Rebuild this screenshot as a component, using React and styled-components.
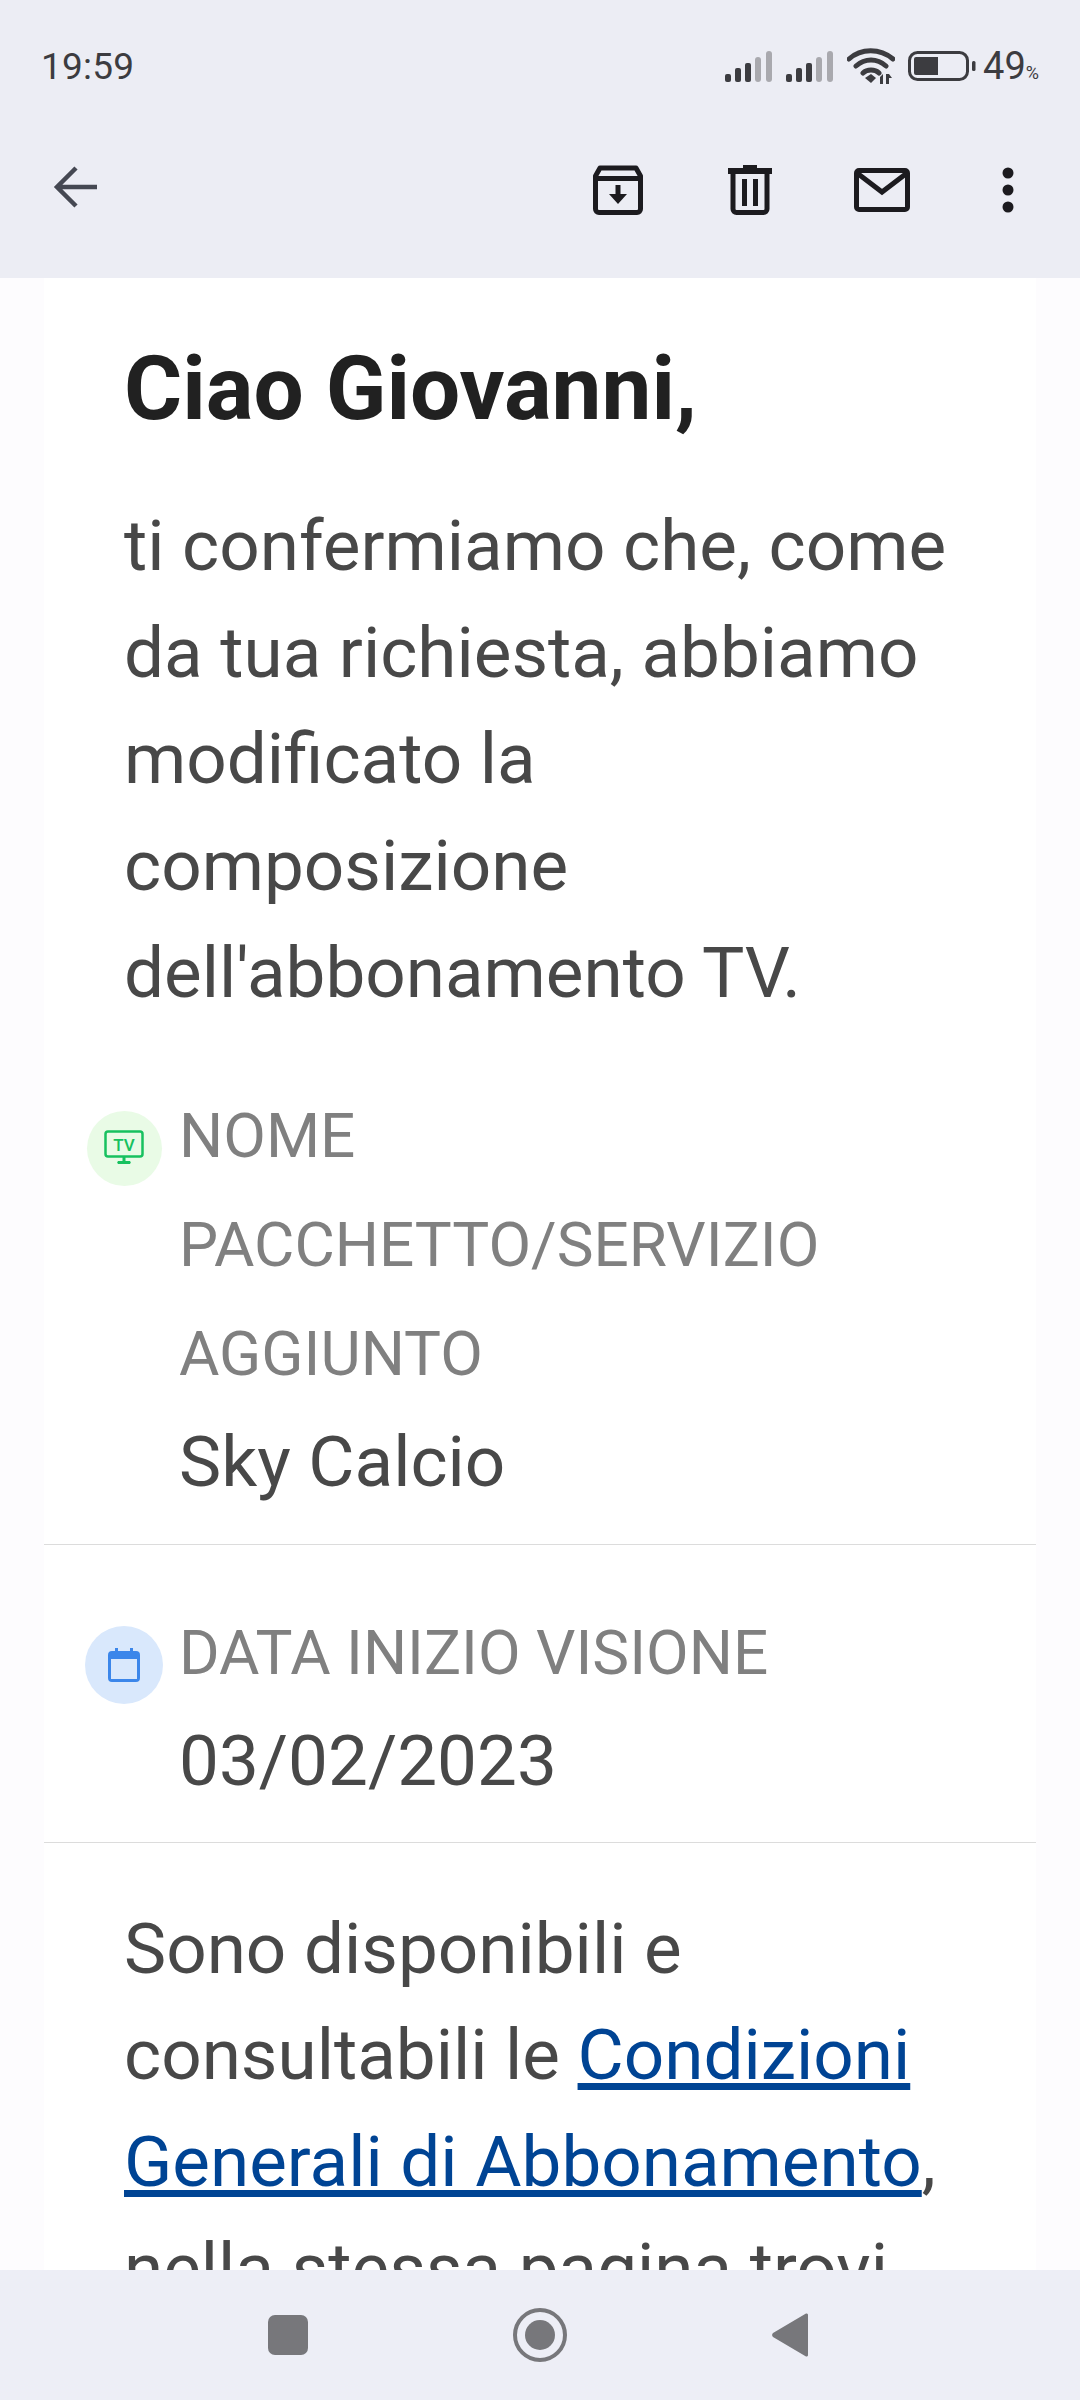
import React from 'react'
import styled, { createGlobalStyle } from 'styled-components'

const GlobalStyle = createGlobalStyle`
  html, body { margin: 0; padding: 0; background: #fff; }
  body { font-family: Roboto, "Liberation Sans", sans-serif; }
`

const Screen = styled.div`
  width: 1080px;
  height: 2400px;
  display: flex;
  flex-direction: column;
  overflow: hidden;
`

const TopBar = styled.header`
  height: 278px;
  flex: none;
  background: #ecedf4;
  box-sizing: border-box;
  padding: 49px 41px 0 41px;
  display: flex;
  flex-direction: column;
`

const StatusRow = styled.div`
  height: 34px;
  display: flex;
  align-items: center;
  justify-content: space-between;
  color: #3c3c40;
`

const Time = styled.span`
  font-size: 37px;
  letter-spacing: 0.2px;
  font-weight: 400;
`

const StatusIcons = styled.div`
  display: flex;
  align-items: center;
  gap: 13px;
`

const Battery = styled.span`
  font-size: 38px;
  margin-left: -6px;
  small { font-size: 18px; }
`

const ActionRow = styled.div`
  margin-top: 82px;
  margin-right: 15px;
  margin-left: 12px;
  display: flex;
  align-items: center;
`

const Actions = styled.div`
  margin-left: auto;
  display: flex;
  align-items: center;
  gap: 82px;
`

const Body = styled.main`
  flex: 1;
  min-height: 0;
  overflow: hidden;
  background: #fdfcfe;
`

const Sheet = styled.div`
  margin: 0 44px;
  background: #fff;
`

const Block = styled.div`
  padding: ${p => p.$top}px 64px 0 80px;
`

const Heading = styled.h1`
  margin: 0;
  font-size: 89px;
  line-height: 104px;
  font-weight: 700;
  color: #212121;
`

const Paragraph = styled.p`
  margin: ${p => p.$top || 0}px 0 0;
  font-size: 71px;
  line-height: 106.7px;
  color: #484848;
  a { color: #004494; text-decoration: underline; }
`

const InfoRow = styled.section`
  display: flex;
  padding: ${p => p.$top}px 40px ${p => p.$bottom}px 0;
  border-bottom: 1px solid #dcdcdc;
`

const BubbleSlot = styled.div`
  flex: none;
  width: 135px;
  display: flex;
  justify-content: center;
  padding-left: 25px;
  box-sizing: border-box;
  align-items: flex-start;
`

const Bubble = styled.div`
  flex: none;
  width: ${p => p.$size}px;
  height: ${p => p.$size}px;
  margin-top: ${p => p.$offset}px;
  border-radius: 50%;
  background: ${p => p.$bg};
  display: flex;
  align-items: center;
  justify-content: center;
`

const InfoText = styled.div`
  flex: 1;
`

const Label = styled.div`
  font-size: 62px;
  line-height: 109px;
  color: #808080;
`

const Value = styled.div`
  font-size: 71px;
  line-height: 107px;
  color: #484848;
`

const NavBar = styled.nav`
  height: 130px;
  flex: none;
  background: #edeef6;
  display: flex;
  align-items: center;
  gap: 205px;
  padding-left: 268px;
`

const Signal = () => (
  <svg width="48" height="31" viewBox="0 0 48 31">
    <rect x="0" y="23" width="6" height="8" rx="2" fill="#3c3c40" />
    <rect x="10" y="17" width="6" height="14" rx="2" fill="#3c3c40" />
    <rect x="20" y="12" width="6" height="19" rx="2" fill="#3c3c40" />
    <rect x="30" y="6" width="6" height="25" rx="3" fill="#a9a9ae" />
    <rect x="41" y="0" width="6" height="31" rx="3" fill="#a9a9ae" />
  </svg>
)

const Wifi = () => (
  <svg width="48" height="36" viewBox="0 0 48 36">
    <path d="M2 11C14 0 33 0 46 11M9 18C18 10 30 10 39 18M16 25C20 21 28 21 32 25" fill="none" stroke="#3c3c40" strokeWidth="5" strokeLinecap="round" />
    <path d="M24 35l-6-5 6-4 5 4z" fill="#3c3c40" />
    <path d="M33 29l3-3v10h-3zM39 26h3l3 4h-3v6h-3z" fill="#3c3c40" />
  </svg>
)

const BatteryIcon = () => (
  <svg width="68" height="30" viewBox="0 0 68 30">
    <rect x="1.500" y="1.500" width="58" height="27" rx="8" fill="none" stroke="#3c3c40" strokeWidth="3" />
    <path d="M6 8a2 2 0 0 1 2-2h22v18H8a2 2 0 0 1-2-2z" fill="#3c3c40" />
    <rect x="64" y="10" width="3.500" height="10" rx="1.500" fill="#3c3c40" />
  </svg>
)

const BackIcon = () => (
  <svg width="44" height="50" viewBox="0 0 44 50">
    <path d="M44 22H5M23 3L4 22l19 19" fill="none" stroke="#454852" strokeWidth="4.500" />
  </svg>
)

const ArchiveIcon = () => (
  <svg width="53" height="50" viewBox="0 0 53 50">
    <path d="M2.500 11L7 3h36l4.500 8v33a3.500 3.500 0 0 1-3.500 3.500H6A3.500 3.500 0 0 1 2.500 44z" fill="none" stroke="#1c1b1f" strokeWidth="5" strokeLinejoin="round" />
    <path d="M3 13.500h44" stroke="#1c1b1f" strokeWidth="5" />
    <path d="M22.500 20h5v9h6.500L25 39l-9-10h6.500z" fill="#1c1b1f" />
  </svg>
)

const TrashIcon = () => (
  <svg width="44" height="50" viewBox="0 0 44 50">
    <path d="M15 0h14v3h15v6H0V3h15z" fill="#1c1b1f" />
    <path d="M5 8v36a3.500 3.500 0 0 0 3.500 3.500h27A3.500 3.500 0 0 0 39 44V8" fill="none" stroke="#1c1b1f" strokeWidth="5" />
    <path d="M16.500 14v27M27.500 14v27" stroke="#1c1b1f" strokeWidth="5" />
  </svg>
)

const MailIcon = () => (
  <svg width="56" height="44" viewBox="0 0 56 44">
    <rect x="2.500" y="2.500" width="51" height="39" rx="2.500" fill="none" stroke="#1c1b1f" strokeWidth="5" />
    <path d="M3 5l25 19L53 5" fill="none" stroke="#1c1b1f" strokeWidth="5" />
  </svg>
)

const MoreIcon = () => (
  <svg width="32" height="46" viewBox="0 0 32 46">
    <circle cx="16" cy="6" r="5.500" fill="#1c1b1f" />
    <circle cx="16" cy="23" r="5.500" fill="#1c1b1f" />
    <circle cx="16" cy="40" r="5.500" fill="#1c1b1f" />
  </svg>
)

const TvIcon = () => (
  <svg width="40" height="36" viewBox="0 0 40 36">
    <rect x="1.500" y="1.500" width="37" height="25" rx="2.500" fill="none" stroke="#17c15f" strokeWidth="2.500" />
    <text x="20" y="21" textAnchor="middle" fontFamily="Roboto, sans-serif" fontSize="17" fontWeight="500" fill="#17c15f">TV</text>
    <path d="M18.500 27h3v4h-3zM14 31h12a2 2 0 0 1 0 3H14a2 2 0 0 1 0-3z" fill="#17c15f" />
  </svg>
)

const CalendarIcon = () => (
  <svg width="32" height="34" viewBox="0 0 32 34">
    <path d="M7 0h3v3h12V0h3v3h3a4 4 0 0 1 4 4v23a4 4 0 0 1-4 4H4a4 4 0 0 1-4-4V7a4 4 0 0 1 4-4h3z" fill="#3b86ea" />
    <rect x="3" y="11" width="26" height="20" fill="#d9e8fc" />
  </svg>
)

const NavSquare = () => (
  <svg width="40" height="40" viewBox="0 0 40 40"><rect width="40" height="40" rx="7" fill="#77777b" /></svg>
)

const NavCircle = () => (
  <svg width="54" height="54" viewBox="0 0 54 54">
    <circle cx="27" cy="27" r="25" fill="none" stroke="#77777b" strokeWidth="4" />
    <circle cx="27" cy="27" r="15" fill="#77777b" />
  </svg>
)

const NavBack = () => (
  <svg width="36" height="46" viewBox="0 0 36 46">
    <path d="M34 1.500a1.500 1.500 0 0 1 2 1.500v40a1.500 1.500 0 0 1-2 1.500L1 25a3 3 0 0 1 0-4z" fill="#77777b" />
  </svg>
)

const App = () => {
  return (
    <Screen>
      <GlobalStyle />
      <TopBar>
        <StatusRow>
          <Time>19:59</Time>
          <StatusIcons>
            <Signal />
            <Signal />
            <Wifi />
            <BatteryIcon />
            <Battery>49<small>%</small></Battery>
          </StatusIcons>
        </StatusRow>
        <ActionRow>
          <BackIcon />
          <Actions>
            <ArchiveIcon />
            <TrashIcon />
            <MailIcon />
            <MoreIcon />
          </Actions>
        </ActionRow>
      </TopBar>
      <Body>
        <Sheet>
          <Block $top={59}>
            <Heading>Ciao Giovanni,</Heading>
            <Paragraph $top={52}>
              ti confermiamo che, come da tua richiesta, abbiamo modificato la composizione dell'abbonamento TV.
            </Paragraph>
          </Block>
          <InfoRow $top={54} $bottom={29}>
            <BubbleSlot>
              <Bubble $bg="#e9fbe6" $size={75} $offset={30}><TvIcon /></Bubble>
            </BubbleSlot>
            <InfoText>
              <Label>NOME PACCHETTO/SERVIZIO AGGIUNTO</Label>
              <Value>Sky Calcio</Value>
            </InfoText>
          </InfoRow>
          <InfoRow $top={53} $bottom={28}>
            <BubbleSlot>
              <Bubble $bg="#d9e8fc" $size={78} $offset={28}><CalendarIcon /></Bubble>
            </BubbleSlot>
            <InfoText>
              <Label>DATA INIZIO VISIONE</Label>
              <Value>03/02/2023</Value>
            </InfoText>
          </InfoRow>
          <Block $top={53}>
            <Paragraph>
              Sono disponibili e consultabili le <a href="#condizioni">Condizioni Generali di Abbonamento</a>, nella stessa pagina trovi
            </Paragraph>
          </Block>
        </Sheet>
      </Body>
      <NavBar>
        <NavSquare />
        <NavCircle />
        <NavBack />
      </NavBar>
    </Screen>
  )
}

export default App
